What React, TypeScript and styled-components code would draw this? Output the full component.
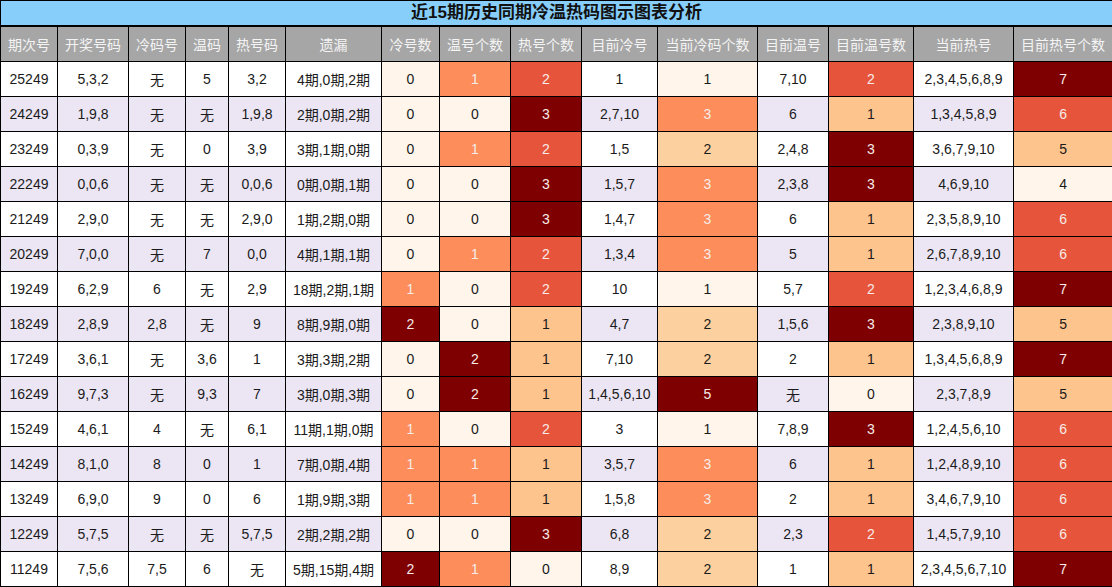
import React from "react";
import styled, { createGlobalStyle } from "styled-components";

const Global = createGlobalStyle`
  html, body { margin: 0; padding: 0; background: #fff; }
  body { font-family: "Liberation Sans", "Noto Sans CJK SC", sans-serif; }
`;

const Table = styled.table`
  width: 1112px;
  border-collapse: collapse;
  table-layout: fixed;
  font-family: "Liberation Sans", "Noto Sans CJK SC", sans-serif;
  font-size: 14px;
  color: #1a1a1a;
`;

const TitleCell = styled.th`
  height: 24px;
  padding: 0;
  background: #87cefa;
  border: 1px solid #000;
  border-bottom-width: 2px;
  font-size: 17px;
  font-weight: bold;
  color: #111;
  text-align: center;
  line-height: 22px;
`;

const HeadCell = styled.th`
  height: 34px;
  padding: 0;
  background: #a6a6a6;
  border: 1px solid #000;
  color: #f4f4f4;
  font-weight: normal;
  font-size: 14px;
  text-align: center;
  white-space: nowrap;
`;

const Row = styled.tr<{ $alt: boolean }>`
  background: ${(p) => (p.$alt ? "#ece6f4" : "#ffffff")};
`;

const Cell = styled.td<{ $bg?: string; $light?: boolean }>`
  height: 34px;
  padding: 0;
  border: 1px solid #000;
  text-align: center;
  white-space: nowrap;
  background: ${(p) => p.$bg || "transparent"};
  color: ${(p) => (p.$light ? "#f6ecea" : "#1a1a1a")};
`;

const widths = [57, 71, 57, 43, 57, 96, 58, 71, 71, 76, 100, 71, 85, 100, 99];
const headers = [
  "期次号", "开奖号码", "冷码号", "温码", "热号码", "遗漏", "冷号数", "温号个数",
  "热号个数", "目前冷号", "当前冷码个数", "目前温号", "目前温号数", "当前热号", "目前热号个数",
];

const C = {
  cream: "#fff5eb",
  pale: "#fdd19f",
  peach: "#fdc48d",
  orange: "#fd8d5a",
  red: "#e6553b",
  dark: "#7f0000",
};

type Heat = { bg: string; light: boolean };
const h = (bg: string, light: boolean): Heat => ({ bg, light });

const scales: Record<number, Record<string, Heat>> = {
  6: { "0": h(C.cream, false), "1": h(C.orange, true), "2": h(C.dark, true) },
  7: { "0": h(C.cream, false), "1": h(C.orange, true), "2": h(C.dark, true) },
  8: { "0": h(C.cream, false), "1": h(C.peach, false), "2": h(C.red, true), "3": h(C.dark, true) },
  10: { "1": h(C.cream, false), "2": h(C.pale, false), "3": h(C.orange, true), "5": h(C.dark, true) },
  12: { "0": h(C.cream, false), "1": h(C.peach, false), "2": h(C.red, true), "3": h(C.dark, true) },
  14: { "4": h(C.cream, false), "5": h(C.peach, false), "6": h(C.red, true), "7": h(C.dark, true) },
};

const data: string[][] = [
  ["25249", "5,3,2", "无", "5", "3,2", "4期,0期,2期", "0", "1", "2", "1", "1", "7,10", "2", "2,3,4,5,6,8,9", "7"],
  ["24249", "1,9,8", "无", "无", "1,9,8", "2期,0期,2期", "0", "0", "3", "2,7,10", "3", "6", "1", "1,3,4,5,8,9", "6"],
  ["23249", "0,3,9", "无", "0", "3,9", "3期,1期,0期", "0", "1", "2", "1,5", "2", "2,4,8", "3", "3,6,7,9,10", "5"],
  ["22249", "0,0,6", "无", "无", "0,0,6", "0期,0期,1期", "0", "0", "3", "1,5,7", "3", "2,3,8", "3", "4,6,9,10", "4"],
  ["21249", "2,9,0", "无", "无", "2,9,0", "1期,2期,0期", "0", "0", "3", "1,4,7", "3", "6", "1", "2,3,5,8,9,10", "6"],
  ["20249", "7,0,0", "无", "7", "0,0", "4期,1期,1期", "0", "1", "2", "1,3,4", "3", "5", "1", "2,6,7,8,9,10", "6"],
  ["19249", "6,2,9", "6", "无", "2,9", "18期,2期,1期", "1", "0", "2", "10", "1", "5,7", "2", "1,2,3,4,6,8,9", "7"],
  ["18249", "2,8,9", "2,8", "无", "9", "8期,9期,0期", "2", "0", "1", "4,7", "2", "1,5,6", "3", "2,3,8,9,10", "5"],
  ["17249", "3,6,1", "无", "3,6", "1", "3期,3期,2期", "0", "2", "1", "7,10", "2", "2", "1", "1,3,4,5,6,8,9", "7"],
  ["16249", "9,7,3", "无", "9,3", "7", "3期,0期,3期", "0", "2", "1", "1,4,5,6,10", "5", "无", "0", "2,3,7,8,9", "5"],
  ["15249", "4,6,1", "4", "无", "6,1", "11期,1期,0期", "1", "0", "2", "3", "1", "7,8,9", "3", "1,2,4,5,6,10", "6"],
  ["14249", "8,1,0", "8", "0", "1", "7期,0期,4期", "1", "1", "1", "3,5,7", "3", "6", "1", "1,2,4,8,9,10", "6"],
  ["13249", "6,9,0", "9", "0", "6", "1期,9期,3期", "1", "1", "1", "1,5,8", "3", "2", "1", "3,4,6,7,9,10", "6"],
  ["12249", "5,7,5", "无", "无", "5,7,5", "2期,2期,2期", "0", "0", "3", "6,8", "2", "2,3", "2", "1,4,5,7,9,10", "6"],
  ["11249", "7,5,6", "7,5", "6", "无", "5期,15期,4期", "2", "1", "0", "8,9", "2", "1", "1", "2,3,4,5,6,7,10", "7"],
];

export default function App() {
  return (
    <>
      <Global />
      <Table>
        <colgroup>
          {widths.map((w, i) => (
            <col key={i} style={{ width: w }} />
          ))}
        </colgroup>
        <thead>
          <tr>
            <TitleCell colSpan={15}>近15期历史同期冷温热码图示图表分析</TitleCell>
          </tr>
          <tr>
            {headers.map((t) => (
              <HeadCell key={t}>{t}</HeadCell>
            ))}
          </tr>
        </thead>
        <tbody>
          {data.map((row, ri) => (
            <Row key={row[0]} $alt={ri % 2 === 1}>
              {row.map((v, ci) => {
                const heat = scales[ci]?.[v];
                return (
                  <Cell key={ci} $bg={heat?.bg} $light={heat?.light}>
                    {v}
                  </Cell>
                );
              })}
            </Row>
          ))}
        </tbody>
      </Table>
    </>
  );
}
